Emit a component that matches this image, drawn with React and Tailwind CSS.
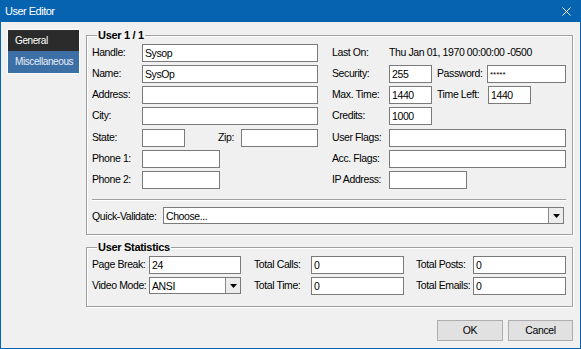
import React from "react";

const font = "font-['Liberation_Sans',Arial,sans-serif]";

const Label = ({ w, children, className = "" }) => (
  <div className={`shrink-0 h-[18px] leading-[16px] ${w} ${className}`}>{children}</div>
);

const Field = ({ w, value = "", className = "" }) => (
  <div className={`shrink-0 h-[18px] ${w} bg-white border border-[#7a7a7a] pl-[2px] leading-[17px] overflow-hidden whitespace-nowrap ${className}`}>
    {value}
  </div>
);

const Arrow = () => (
  <svg width="7" height="4" viewBox="0 0 7 4">
    <path d="M0 0h7L3.5 4z" fill="#000" />
  </svg>
);

const Combo = ({ w, value, h = "h-[17px]" }) => (
  <div className={`shrink-0 ${h} ${w} bg-white border border-[#7a7a7a] flex items-stretch`}>
    <div className="flex-1 pl-[2px] leading-[16px] whitespace-nowrap overflow-hidden">{value}</div>
    <div className="w-[15px] bg-[#ececec] border-l border-[#8a8a8a] flex items-center justify-center">
      <Arrow />
    </div>
  </div>
);

const Row = ({ children, className = "" }) => (
  <div className={`flex items-start h-[18px] ${className}`}>{children}</div>
);

const Group = ({ title, className = "", children }) => (
  <fieldset
    className={`border border-[#a0a0a0] shadow-[inset_1px_1px_0_#fff,1px_1px_0_#fff] pl-[5px] pr-[6px] ${className}`}
  >
    <legend className="ml-[5px] px-[1px] font-bold text-[11px] tracking-[-0.3px] leading-[13px] text-black">
      {title}
    </legend>
    {children}
  </fieldset>
);

export default function App() {
  return (
    <div className={`w-[581px] h-[349px] bg-[#0563b0] flex flex-col px-[1px] pb-[1px] ${font} text-[10.5px] tracking-[-0.4px] text-black`}>
      <div className="h-[22px] shrink-0 flex items-center justify-between pl-[4px] pr-[9px] text-white">
        <span className="text-[11px] tracking-[-0.5px]">User Editor</span>
        <svg width="9" height="9" viewBox="0 0 9 9">
          <path d="M0.5 0.5l8 8M8.5 0.5l-8 8" stroke="#fff" strokeWidth="1" />
        </svg>
      </div>

      <div className="flex-1 bg-[#f0f0f0] flex">
        <div className="pt-[7px] pl-[6px] pr-[6px]">
          <div className="w-[73px] border border-[#fbfbfb] bg-[#fbfbfb] text-[10px] tracking-[-0.4px]">
            <div className="h-[21px] bg-[#2b2b2b] text-white pl-[7px] leading-[21px]">General</div>
            <div className="h-[22px] bg-[#3d6fa7] text-[#e6eef7] pl-[7px] leading-[22px]">Miscellaneous</div>
          </div>
        </div>

        <div className="flex-1 flex flex-col pt-[7px] pr-[7px]">
          <Group title="User 1 / 1" className="h-[206px]">
            <div className="flex mt-[2px]">
              <div className="flex flex-col gap-[3px] w-[240px]">
                <Row><Label w="w-[50px]">Handle:</Label><Field w="w-[176px]" value="Sysop" /></Row>
                <Row><Label w="w-[50px]">Name:</Label><Field w="w-[176px]" value="SysOp" /></Row>
                <Row><Label w="w-[50px]">Address:</Label><Field w="w-[176px]" /></Row>
                <Row><Label w="w-[50px]">City:</Label><Field w="w-[176px]" /></Row>
                <Row className="mt-[1px]">
                  <Label w="w-[50px]">State:</Label>
                  <Field w="w-[43px]" />
                  <Label w="w-[56px]" className="pl-[33px]">Zip:</Label>
                  <Field w="w-[77px]" />
                </Row>
                <Row><Label w="w-[50px]">Phone 1:</Label><Field w="w-[78px]" /></Row>
                <Row><Label w="w-[50px]">Phone 2:</Label><Field w="w-[78px]" /></Row>
              </div>
              <div className="flex flex-col gap-[3px]">
                <Row>
                  <Label w="w-[57px]">Last On:</Label>
                  <div className="leading-[16px] whitespace-nowrap">Thu Jan 01, 1970 00:00:00 -0500</div>
                </Row>
                <Row>
                  <Label w="w-[57px]">Security:</Label>
                  <Field w="w-[43px]" value="255" />
                  <Label w="w-[55px]" className="pl-[5px]">Password:</Label>
                  <Field w="w-[79px]" value="*****" className="text-[8px] tracking-[0px]" />
                </Row>
                <Row>
                  <Label w="w-[57px]">Max. Time:</Label>
                  <Field w="w-[43px]" value="1440" />
                  <Label w="w-[56px]" className="pl-[5px]">Time Left:</Label>
                  <Field w="w-[43px]" value="1440" />
                </Row>
                <Row><Label w="w-[57px]">Credits:</Label><Field w="w-[43px]" value="1000" /></Row>
                <Row className="mt-[1px]"><Label w="w-[57px]">User Flags:</Label><Field w="w-[177px]" /></Row>
                <Row><Label w="w-[57px]">Acc. Flags:</Label><Field w="w-[177px]" /></Row>
                <Row><Label w="w-[57px]">IP Address:</Label><Field w="w-[78px]" /></Row>
              </div>
            </div>
            <div className="mt-[10px] h-[2px] border-t border-[#a0a0a0] border-b border-b-white" />
            <div className="flex items-start mt-[6px] pr-[2px]">
              <Label w="w-[71px]" className="pt-[1px]">Quick-Validate:</Label>
              <Combo w="flex-1" value="Choose..." />
            </div>
          </Group>

          <Group title="User Statistics" className="h-[66px] mt-[6px]">
            <div className="flex flex-col gap-[3px] mt-[2px]">
              <Row>
                <Label w="w-[57px]">Page Break:</Label>
                <Field w="w-[92px]" value="24" />
                <Label w="w-[70px]" className="pl-[13px]">Total Calls:</Label>
                <Field w="w-[93px]" value="0" />
                <Label w="w-[69px]" className="pl-[12px]">Total Posts:</Label>
                <Field w="w-[93px]" value="0" />
              </Row>
              <Row>
                <Label w="w-[57px]">Video Mode:</Label>
                <Combo w="w-[92px]" value="ANSI" />
                <Label w="w-[70px]" className="pl-[13px]">Total Time:</Label>
                <Field w="w-[93px]" value="0" />
                <Label w="w-[69px]" className="pl-[12px]">Total Emails:</Label>
                <Field w="w-[93px]" value="0" />
              </Row>
            </div>
          </Group>

          <div className="flex justify-end gap-[5px] mt-[13px]">
            <button className="w-[66px] h-[21px] bg-[#e1e1e1] border border-[#adadad] leading-[19px]">OK</button>
            <button className="w-[65px] h-[21px] bg-[#e1e1e1] border border-[#adadad] leading-[19px]">Cancel</button>
          </div>
        </div>
      </div>
    </div>
  );
}
